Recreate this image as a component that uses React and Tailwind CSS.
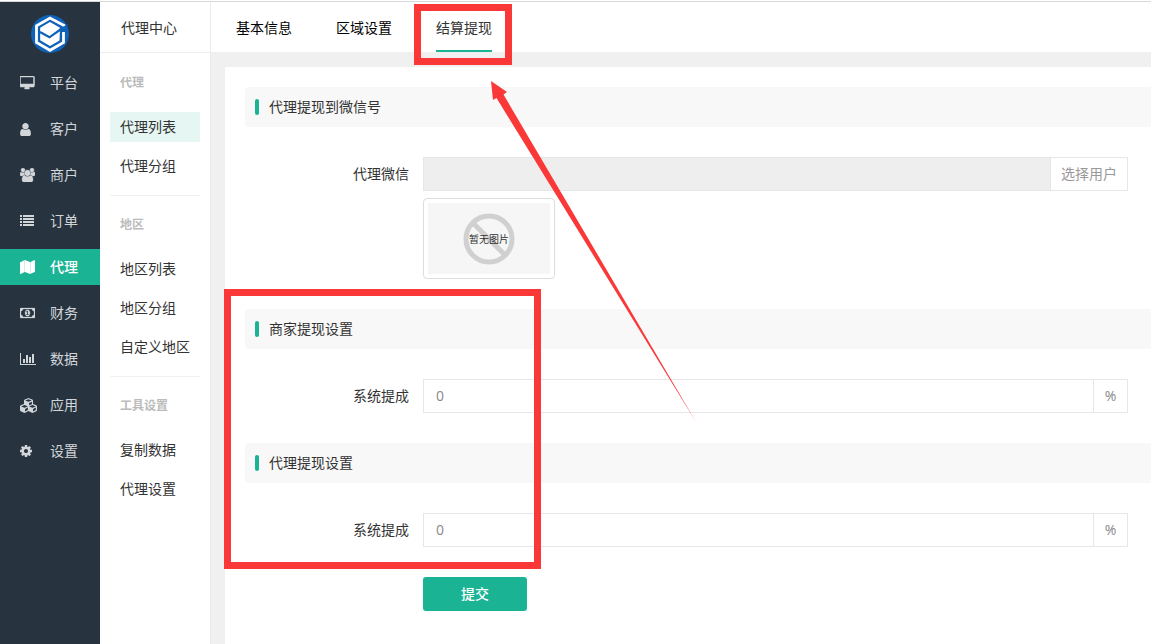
import React from "react";
import { FaCubes } from "react-icons/fa";

function Glyph({ box = "0 0 1920 1792", className = "h-[14px] w-[15px]", children }) {
  return (
    <svg viewBox={box} className={className} fill="currentColor" aria-hidden="true">
      {children}
    </svg>
  );
}

const icons = {
  desktop: (
    <Glyph>
      <path d="M1728 992v-832q0-13-9.5-22.5t-22.5-9.5h-1600q-13 0-22.5 9.5t-9.5 22.5v832q0 13 9.5 22.5t22.5 9.5h1600q13 0 22.5-9.5t9.5-22.5zm128-832v1088q0 66-47 113t-113 47h-544q0 37 16 77.5t32 71 16 43.5q0 26-19 45t-45 19h-512q-26 0-45-19t-19-45q0-14 16-44t32-70 16-78h-544q-66 0-113-47t-47-113v-1088q0-66 47-113t113-47h1600q66 0 113 47t47 113z" stroke="currentColor" strokeWidth="60" />
    </Glyph>
  ),
  user: (
    <Glyph box="256 0 1280 1660" className="h-[14px] w-[11px]">
      <path d="M1536 1399q0 109-62.5 187t-150.5 78h-854q-88 0-150.5-78t-62.5-187q0-85 8.5-160.5t31.5-152 58.5-131 94-89 134.5-34.5q131 128 313 128t313-128q76 0 134.500 34.500t94 89 58.500 131 31.500 152 8.500 160.500zm-256-887q0 159-112.500 271.500t-271.500 112.500-271.500-112.500-112.500-271.500 112.500-271.500 271.500-112.500 271.500 112.500 112.500 271.500z" />
    </Glyph>
  ),
  users: (
    <Glyph>
      <path d="M593 896q-162 5-265 128h-134q-82 0-138-40.5t-56-118.5q0-353 124-353 6 0 43.5 21t97.5 42.5 119 21.5q67 0 133-23-5 37-5 66 0 159 93 293zm1071 637q0 120-73 189.5t-194 69.5h-874q-121 0-194-69.5t-73-189.5q0-53 3.5-103.5t14-109 26.5-108.5 43-97.5 62-81 85.5-53.5 111.5-20q10 0 43 21.5t73 48 107 48 135 21.5 135-21.5 107-48 73-48 43-21.5q61 0 111.5 20t85.5 53.5 62 81 43 97.5 26.5 108.5 14 109 3.5 103.5zm-1024-1277q0 106-75 181t-181 75-181-75-75-181 75-181 181-75 181 75 75 181zm704 384q0 159-112.5 271.5t-271.5 112.5-271.5-112.5-112.5-271.5 112.5-271.5 271.5-112.5 271.5 112.5 112.5 271.5zm576 225q0 78-56 118.5t-138 40.5h-134q-103-123-265-128 93-134 93-293 0-29-5-66 66 23 133 23 59 0 119-21.5t97.5-42.5 43.5-21q124 0 124 353zm-128-609q0 106-75 181t-181 75-181-75-75-181 75-181 181-75 181 75 75 181z" stroke="currentColor" strokeWidth="40" />
    </Glyph>
  ),
  list: (
    <Glyph box="0 0 14 14" className="h-[14px] w-[14px]">
      {[1, 4, 7, 10].map((y) => (
        <g key={y}>
          <rect x="0" y={y} width="2" height="2" />
          <rect x="3" y={y} width="11" height="2" />
        </g>
      ))}
    </Glyph>
  ),
  map: (
    <Glyph box="0 0 15 14" className="h-[14px] w-[15px]">
      <path d="M0.3 2.2 4.7 0v12L0.6 14Q0 14.1 0 13.600V2.700Q0 2.400 0.300 2.200ZM4.900 0 10 2.100V14L4.900 12ZM10.200 2.200 14.400 0Q15 0 15 0.400V11.400Q15 11.700 14.700 11.900L10.200 14Z" />
    </Glyph>
  ),
  money: (
    <Glyph>
      <path d="M768 1152h384v-96h-128v-448h-114l-148 137 77 80q42-37 55-57h2v288h-128v96zm512-256q0 70-21 142t-59.5 134-101.5 101-138 39-138-39-101.5-101-59.5-134-21-142 21-142 59.5-134 101.5-101 138-39 138 39 101.5 101 59.5 134 21 142zm512 256v-512q-106 0-181-75t-75-181h-1152q0 106-75 181t-181 75v512q106 0 181 75t75 181h1152q0-106 75-181t181-75zm128-832v1152q0 26-19 45t-45 19h-1792q-26 0-45-19t-19-45v-1152q0-26 19-45t45-19h1792q26 0 45 19t19 45z" stroke="currentColor" strokeWidth="30" />
    </Glyph>
  ),
  chart: (
    <Glyph box="0 0 2048 1792" className="h-[14px] w-[16px]">
      <path d="M640 896v512h-256v-512h256zm384-512v1024h-256v-1024h256zm1024 1152v128h-2048v-1536h128v1408h1920zm-640-896v768h-256v-768h256zm384-384v1152h-256v-1152h256z" />
    </Glyph>
  ),
  cubes: <FaCubes className="h-[17px] w-[17px]" />,
  gear: (
    <Glyph box="128 0 1536 1792" className="h-[14px] w-[12px]">
      <path d="M1152 896q0-106-75-181t-181-75-181 75-75 181 75 181 181 75 181-75 75-181zm512-109v222q0 12-8 23t-20 13l-185 28q-19 54-39 91 35 50 107 138 10 12 10 25t-9 23q-27 37-99 108t-94 71q-12 0-26-9l-138-108q-44 23-91 38-16 136-29 186-7 28-36 28h-222q-14 0-24.5-8.5t-11.5-21.5l-28-184q-49-16-90-37l-141 107q-10 9-25 9-14 0-25-11-126-114-165-168-7-10-7-23 0-12 8-23 15-21 51-66.5t54-70.5q-27-50-41-99l-183-27q-13-2-21-12.5t-8-23.5v-222q0-12 8-23t19-13l186-28q14-46 39-92-40-57-107-138-10-12-10-24 0-10 9-23 26-36 98.5-107.5t94.5-71.5q13 0 26 10l138 107q44-23 91-38 16-136 29-186 7-28 36-28h222q14 0 24.5 8.5t11.5 21.5l28 184q49 16 90 37l142-107q9-9 24-9 13 0 25 10 129 119 165 170 7 8 7 22 0 12-8 23-15 21-51 66.5t-54 70.5q26 50 41 98l183 28q13 2 21 12.5t8 23.5z" />
    </Glyph>
  ),
};

const mainMenu = [
  ["desktop", "平台"],
  ["user", "客户"],
  ["users", "商户"],
  ["list", "订单"],
  ["map", "代理"],
  ["money", "财务"],
  ["chart", "数据"],
  ["cubes", "应用"],
  ["gear", "设置"],
];

const subMenu = [
  { title: "代理", items: ["代理列表", "代理分组"] },
  { title: "地区", items: ["地区列表", "地区分组", "自定义地区"] },
  { title: "工具设置", items: ["复制数据", "代理设置"] },
];

const tabs = ["基本信息", "区域设置", "结算提现"];

function Logo() {
  return (
    <svg viewBox="0 0 38 38" className="h-[38px] w-[38px]" aria-hidden="true">
      <circle cx="19" cy="19" r="19" fill="#0f62b8" />
      <path d="M34 11 19 3 5.500 10.800V27.500L19 35.300 32.500 27.500V17" fill="none" stroke="#fff" strokeWidth="2.800" />
      <path d="M19 7 29 12.700 28.500 25.500 19 31 9.200 25.300V12.700Z" fill="#fff" />
      <path d="M9 17 18.500 22.300 29.500 14.500" fill="none" stroke="#0f62b8" strokeWidth="2.200" />
      <path d="M28 14.500 37 9.500" fill="none" stroke="#0f62b8" strokeWidth="1" />
    </svg>
  );
}

function Sidebar() {
  return (
    <aside className="w-[100px] shrink-0 bg-[#273440] pt-[13px]">
      <a href="#home" aria-label="首页" className="flex justify-center">
        <Logo />
      </a>
      <nav className="mt-3 flex flex-col gap-[10px]">
        {mainMenu.map(([icon, label]) => (
          <a
            key={label}
            href="#menu"
            className={
              label === "代理"
                ? "flex h-9 items-center bg-[#1ab394] pl-5 font-medium text-white"
                : "flex h-9 items-center pl-5 text-[#d3d6d9]"
            }
          >
            <span className="flex w-[30px]">{icons[icon]}</span>
            {label}
          </a>
        ))}
      </nav>
    </aside>
  );
}

function SubMenu() {
  return (
    <aside className="w-[111px] shrink-0 border-r border-[#ebebeb] bg-white">
      <h1 className="h-[51px] border-b border-[#ededed] pt-4 pl-[21px] text-[#333]">代理中心</h1>
      <nav className="px-[10px]">
        {subMenu.map((group) => (
          <section key={group.title} className="border-t border-[#f0f0f0] pt-[19px] pb-[14px] first:border-white">
            <h2 className="pl-[10px] text-xs leading-5 font-bold text-[#bbb]">{group.title}</h2>
            <div className="mt-[19px] flex flex-col gap-[9px]">
              {group.items.map((item) => (
                <a
                  key={item}
                  href="#item"
                  className={
                    item === "代理列表"
                      ? "flex h-[30px] items-center bg-[#e6f6f3] pl-[10px] whitespace-nowrap"
                      : "flex h-[30px] items-center pl-[10px] whitespace-nowrap"
                  }
                >
                  {item}
                </a>
              ))}
            </div>
          </section>
        ))}
      </nav>
    </aside>
  );
}

function SectionTitle({ children }) {
  return (
    <h3 className="mb-[30px] flex h-10 items-center gap-[10px] rounded-l bg-[#f8f8f8] pl-[10px]">
      <span className="h-4 w-1 rounded-full bg-[#1ab394]" />
      {children}
    </h3>
  );
}

function Field({ id, label, children }) {
  return (
    <div className="mb-[30px] flex items-start pr-[23px]">
      <label htmlFor={id} className="w-[178px] shrink-0 pr-[14px] text-right leading-[34px]">
        {label}
      </label>
      <div className="min-w-0 flex-1">{children}</div>
    </div>
  );
}

function PercentInput({ id }) {
  return (
    <div className="flex h-[34px] border border-[#e5e6e7] text-[#888]">
      <input id={id} type="text" defaultValue="0" className="min-w-0 flex-1 bg-white px-3 outline-none" />
      <span className="flex w-[34px] items-center justify-center border-l border-[#e5e6e7]">%</span>
    </div>
  );
}

function NoImage() {
  return (
    <div className="mt-[7px] h-[81px] w-[132px] rounded border border-[#ddd] bg-white p-1">
      <div className="grid h-full place-items-center bg-[#f6f6f6]">
        <svg viewBox="0 0 52 52" className="col-start-1 row-start-1 h-[52px] w-[52px]" aria-hidden="true">
          <circle cx="26" cy="26" r="23" fill="none" stroke="#d0d0d0" strokeWidth="5" />
          <path d="M10 10 42 42" stroke="#d0d0d0" strokeWidth="5" />
        </svg>
        <span className="col-start-1 row-start-1 text-[10px] leading-4 text-[#333]">暂无图片</span>
      </div>
    </div>
  );
}

function Annotations() {
  return (
    <>
      <div className="pointer-events-none absolute top-[4px] left-[414px] h-[61px] w-[98px] border-[7px] border-[#fa3838]" />
      <div className="pointer-events-none absolute top-[289px] left-[224px] h-[280px] w-[317px] border-[7px] border-[#fa3838]" />
      <svg viewBox="0 0 206 342" className="pointer-events-none absolute top-[81px] left-[491px] h-[342px] w-[206px]" aria-hidden="true">
        <path d="M0 0 16 11 12.500 13.500 205 341 5.500 17 2 19Z" fill="#fa3838" />
      </svg>
    </>
  );
}

export default function App() {
  return (
    <div className="relative flex min-h-screen flex-col overflow-hidden bg-[#f0f0f0] font-['Open_Sans','Noto_Sans_CJK_SC',sans-serif] text-sm leading-5 text-[#333]">
      <div className="h-[2px] border-b border-[#d5dbdb] bg-white" />
      <div className="flex flex-1">
        <Sidebar />
        <SubMenu />
        <div className="flex min-w-0 flex-1 flex-col">
          <nav className="flex h-[50px] shrink-0 gap-11 bg-white pl-[25px]">
            {tabs.map((tab) => (
              <a
                key={tab}
                href="#tab"
                className={
                  tab === "结算提现"
                    ? "border-b-2 border-[#1ab394] pt-4"
                    : "border-b-2 border-transparent pt-4 text-black"
                }
              >
                {tab}
              </a>
            ))}
          </nav>
          <main className="mt-[15px] ml-[14px] flex-1 bg-white pt-5 pl-5">
            <form onSubmit={(e) => e.preventDefault()}>
              <SectionTitle>代理提现到微信号</SectionTitle>
              <Field id="wechat" label="代理微信">
                <div className="flex h-[34px] border border-[#e5e6e7]">
                  <input id="wechat" type="text" readOnly className="min-w-0 flex-1 bg-[#eee] px-3 outline-none" />
                  <button type="button" className="border-l border-[#e5e6e7] bg-white px-[10px] text-[#999]">
                    选择用户
                  </button>
                </div>
                <NoImage />
              </Field>
              <SectionTitle>商家提现设置</SectionTitle>
              <Field id="merchant-rate" label="系统提成">
                <PercentInput id="merchant-rate" />
              </Field>
              <SectionTitle>代理提现设置</SectionTitle>
              <Field id="agent-rate" label="系统提成">
                <PercentInput id="agent-rate" />
              </Field>
              <button type="submit" className="ml-[178px] h-[34px] w-[104px] rounded-[3px] bg-[#1ab394] font-medium text-white">
                提交
              </button>
            </form>
          </main>
        </div>
      </div>
      <Annotations />
    </div>
  );
}
